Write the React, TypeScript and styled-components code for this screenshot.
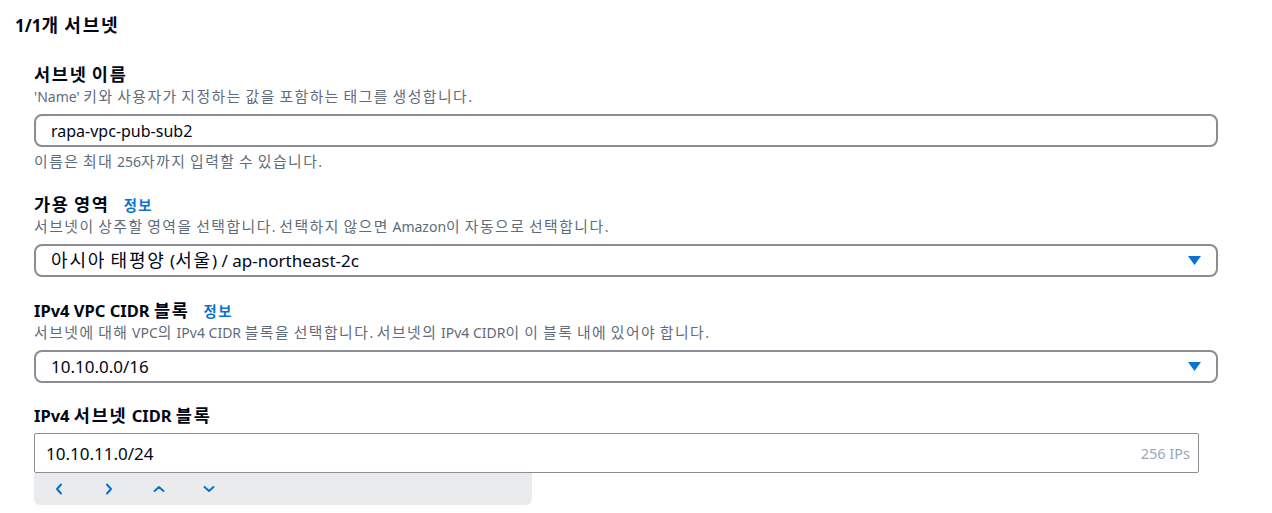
import styled, { createGlobalStyle } from 'styled-components';

const GlobalStyle = createGlobalStyle`
  html, body {
    margin: 0;
    padding: 0;
    background: #ffffff;
  }
  body {
    font-family: 'Noto Sans', 'Noto Sans CJK KR', sans-serif;
    color: #000716;
  }
`;

const Page = styled.div`
  padding: 14px 54px 0 15px;
`;

const Title = styled.h2`
  margin: 0;
  height: 24px;
  font-size: 17px;
  line-height: 24px;
  font-weight: 700;
`;

const Fields = styled.div`
  display: flex;
  flex-direction: column;
  margin-top: 24px;
  padding-left: 19px;
`;

const Field = styled.div<{ $gap?: number }>`
  display: flex;
  flex-direction: column;
  margin-top: ${(p) => p.$gap ?? 0}px;
`;

const LabelRow = styled.div`
  display: flex;
  align-items: baseline;
  gap: 14px;
  height: 22px;
  padding-top: 2px;
`;

const Label = styled.label`
  font-size: 16.5px;
  line-height: 22px;
  font-weight: 700;
`;

const InfoLink = styled.a`
  font-size: 13.5px;
  line-height: 22px;
  font-weight: 600;
  color: #0972d3;
  text-decoration: none;
`;

const Description = styled.div`
  margin-top: 2px;
  height: 18px;
  font-size: 14px;
  line-height: 18px;
  color: #5f6b7a;
`;

const Control = styled.div<{ $size?: number }>`
  margin-top: 8px;
  box-sizing: border-box;
  height: 33px;
  border: 2px solid #8c8c94;
  border-radius: 8px;
  display: flex;
  align-items: center;
  justify-content: space-between;
  padding: 0 15px 0 15px;
  font-size: ${(p) => p.$size ?? 16}px;
  color: #000716;
`;

const Helper = styled.div`
  margin-top: 6px;
  height: 18px;
  font-size: 14px;
  line-height: 18px;
  color: #5f6b7a;
`;

const CidrInput = styled.div`
  margin-top: 6px;
  box-sizing: border-box;
  width: 1165px;
  height: 40px;
  border: 1px solid #8c8c94;
  border-radius: 2px;
  display: flex;
  align-items: center;
  justify-content: space-between;
  padding: 0 8px 0 11px;
  font-size: 17px;
`;

const IpCount = styled.span`
  font-size: 14.5px;
  color: #9ba7b6;
`;

const Stepper = styled.div`
  display: flex;
  width: 498px;
  height: 32px;
  background: #e9ebed;
  border-radius: 0 0 6px 6px;
`;

const StepButton = styled.button`
  width: 50px;
  height: 32px;
  border: none;
  background: transparent;
  padding: 0;
  display: flex;
  align-items: center;
  justify-content: center;
  color: #0972d3;
`;

// Hangul in the original renders larger and wider than Noto CJK at the same size
const Hangul = styled.span`
  font-size: 1.06em;
  line-height: 1;
  letter-spacing: 0.1em;
`;

const HANGUL = /([\uAC00-\uD7A3]+)/;

const Ko = ({ children }: { children: string }) => (
  <>
    {children.split(HANGUL).map((part, i) =>
      i % 2 === 1 ? <Hangul key={i}>{part}</Hangul> : part
    )}
  </>
);

const Chevron = ({ d }: { d: string }) => (
  <svg width="14" height="14" viewBox="0 0 14 14" fill="none">
    <path d={d} stroke="currentColor" strokeWidth="2" strokeLinecap="round" strokeLinejoin="round" />
  </svg>
);

const Caret = () => (
  <svg width="13" height="9" viewBox="0 0 13 9">
    <polygon points="0,0 13,0 6.5,9" fill="#0972d3" />
  </svg>
);

function App() {
  return (
    <>
      <GlobalStyle />
      <Page>
        <Title><Ko>1/1개 서브넷</Ko></Title>
        <Fields>
          <Field>
            <LabelRow>
              <Label><Ko>서브넷 이름</Ko></Label>
            </LabelRow>
            <Description><Ko>'Name' 키와 사용자가 지정하는 값을 포함하는 태그를 생성합니다.</Ko></Description>
            <Control>rapa-vpc-pub-sub2</Control>
            <Helper><Ko>이름은 최대 256자까지 입력할 수 있습니다.</Ko></Helper>
          </Field>

          <Field $gap={21}>
            <LabelRow>
              <Label><Ko>가용 영역</Ko></Label>
              <InfoLink href="#"><Ko>정보</Ko></InfoLink>
            </LabelRow>
            <Description><Ko>서브넷이 상주할 영역을 선택합니다. 선택하지 않으면 Amazon이 자동으로 선택합니다.</Ko></Description>
            <Control $size={17}>
              <span><Ko>아시아 태평양 (서울) / ap-northeast-2c</Ko></span>
              <Caret />
            </Control>
          </Field>

          <Field $gap={21}>
            <LabelRow>
              <Label><Ko>IPv4 VPC CIDR 블록</Ko></Label>
              <InfoLink href="#"><Ko>정보</Ko></InfoLink>
            </LabelRow>
            <Description><Ko>서브넷에 대해 VPC의 IPv4 CIDR 블록을 선택합니다. 서브넷의 IPv4 CIDR이 이 블록 내에 있어야 합니다.</Ko></Description>
            <Control $size={17}>
              <span>10.10.0.0/16</span>
              <Caret />
            </Control>
          </Field>

          <Field $gap={20}>
            <LabelRow>
              <Label><Ko>IPv4 서브넷 CIDR 블록</Ko></Label>
            </LabelRow>
            <CidrInput>
              <span>10.10.11.0/24</span>
              <IpCount>256 IPs</IpCount>
            </CidrInput>
            <Stepper>
              <StepButton aria-label="left"><Chevron d="M9 2.5 L5 7 L9 11.5" /></StepButton>
              <StepButton aria-label="right"><Chevron d="M5 2.5 L9 7 L5 11.5" /></StepButton>
              <StepButton aria-label="up"><Chevron d="M2.5 9 L7 5 L11.5 9" /></StepButton>
              <StepButton aria-label="down"><Chevron d="M2.5 5 L7 9 L11.5 5" /></StepButton>
            </Stepper>
          </Field>
        </Fields>
      </Page>
    </>
  );
}

export default App;
